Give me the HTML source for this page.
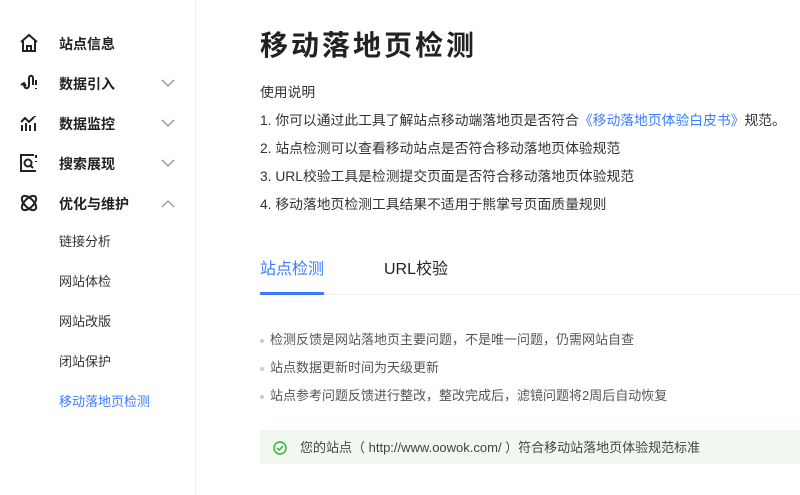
<!DOCTYPE html><html><head><meta charset="utf-8"><style>
body{margin:0;width:800px;height:495px;overflow:hidden;background:#fff;font-family:"Liberation Sans","Noto Sans CJK SC",sans-serif;position:relative}
.a{position:absolute;white-space:nowrap}
.side{position:absolute;left:0;top:0;width:195px;height:495px;border-right:1px solid #eee}
.m{position:absolute;left:59px;font-size:14px;font-weight:bold;color:#222;line-height:20px}
.s{position:absolute;left:59px;font-size:13px;color:#333;line-height:20px}
.ic{position:absolute;left:19px}
.ch{position:absolute;left:161px}
.t{font-size:13.8px;color:#333;left:260px;line-height:20px}
.b{font-size:13px;color:#555;left:270px;line-height:20px}
.dot{position:absolute;left:260px;width:4px;height:4px;background:#ccc;border-radius:2px}
</style></head><body>
<div class="side">
<svg class="ic" style="top:33px" width="20" height="20" viewBox="0 0 20 20" fill="none" stroke="#222" stroke-width="2"><path d="M2 9 L10 2 L18 9 M4 8 V18 H16 V8 M8 18 V13 H12 V18"/></svg>
<div class="m" style="top:34px">站点信息</div>
<svg class="ic" style="top:73px" width="20" height="20" viewBox="0 0 20 20" fill="none" stroke="#222" stroke-width="2"><path d="M2 12 L5 10 L7 13 M5 10 C4 16 10 17 10 12 V5 C10 2 14 2 14 5 V12"/><path d="M17 7 V12 M17 15 V16"/></svg>
<div class="m" style="top:74px">数据引入</div>
<svg class="ch" style="top:79px" width="14" height="9" viewBox="0 0 14 9" fill="none" stroke="#999" stroke-width="1.3"><path d="M1 1 L7 7 L13 1"/></svg>
<svg class="ic" style="top:113px" width="20" height="20" viewBox="0 0 20 20" fill="none" stroke="#222" stroke-width="2"><path d="M2 9 L6 5 L10 9 L15 4 M3 12 V18 M7 10 V18 M11 12 V18 M16 10 V18 M16 3 V4"/></svg>
<div class="m" style="top:114px">数据监控</div>
<svg class="ch" style="top:119px" width="14" height="9" viewBox="0 0 14 9" fill="none" stroke="#999" stroke-width="1.3"><path d="M1 1 L7 7 L13 1"/></svg>
<svg class="ic" style="top:153px" width="20" height="20" viewBox="0 0 20 20" fill="none" stroke="#222" stroke-width="2"><path d="M15 2 H2 V18 H17 M17 2 V5 M17 8 V9"/><circle cx="9" cy="10" r="3.5"/><path d="M11.5 12.5 L14 15"/></svg>
<div class="m" style="top:154px">搜索展现</div>
<svg class="ch" style="top:159px" width="14" height="9" viewBox="0 0 14 9" fill="none" stroke="#999" stroke-width="1.3"><path d="M1 1 L7 7 L13 1"/></svg>
<svg class="ic" style="top:193px" width="20" height="20" viewBox="0 0 20 20" fill="none" stroke="#222" stroke-width="2"><ellipse cx="10" cy="10" rx="9" ry="4.5" transform="rotate(45 10 10)"/><ellipse cx="10" cy="10" rx="9" ry="4.5" transform="rotate(-45 10 10)"/></svg>
<div class="m" style="top:194px">优化与维护</div>
<svg class="ch" style="top:199px" width="14" height="9" viewBox="0 0 14 9" fill="none" stroke="#999" stroke-width="1.3"><path d="M1 8 L7 2 L13 8"/></svg>
<div class="s" style="top:232px">链接分析</div>
<div class="s" style="top:272px">网站体检</div>
<div class="s" style="top:312px">网站改版</div>
<div class="s" style="top:352px">闭站保护</div>
<div class="s" style="top:392px;color:#3b7cff">移动落地页检测</div>
</div>
<div class="a" style="left:260px;top:26px;font-size:28px;font-weight:bold;color:#222;line-height:40px;letter-spacing:3px">移动落地页检测</div>
<div class="a t" style="top:83px">使用说明</div>
<div class="a t" style="top:111px">1. 你可以通过此工具了解站点移动端落地页是否符合<span style="color:#3b7cff">《移动落地页体验白皮书》</span>规范。</div>
<div class="a t" style="top:139px">2. 站点检测可以查看移动站点是否符合移动落地页体验规范</div>
<div class="a t" style="top:167px">3. URL校验工具是检测提交页面是否符合移动落地页体验规范</div>
<div class="a t" style="top:195px">4. 移动落地页检测工具结果不适用于熊掌号页面质量规则</div>
<div class="a" style="left:260px;top:259px;font-size:16px;color:#3b7cff;line-height:22px">站点检测</div>
<div class="a" style="left:384px;top:259px;font-size:16px;color:#222;line-height:22px">URL校验</div>
<div class="a" style="left:260px;top:294px;width:540px;height:1px;background:#eee"></div>
<div class="a" style="left:260px;top:292px;width:64px;height:3px;background:#3b7cff"></div>
<div class="dot" style="top:339px"></div><div class="a b" style="top:330px">检测反馈是网站落地页主要问题，不是唯一问题，仍需网站自查</div>
<div class="dot" style="top:367px"></div><div class="a b" style="top:358px">站点数据更新时间为天级更新</div>
<div class="dot" style="top:395px"></div><div class="a b" style="top:386px">站点参考问题反馈进行整改，整改完成后，滤镜问题将2周后自动恢复</div>
<div class="a" style="left:260px;top:430px;width:540px;height:34px;background:#f1f8f0"></div>
<svg class="a" style="left:273px;top:441px" width="14" height="14" viewBox="0 0 14 14" fill="none" stroke="#2bb52b" stroke-width="1.4"><circle cx="7" cy="7" r="6"/><path d="M4 7 L6.2 9 L10 5"/></svg>
<div class="a" style="left:300px;top:438px;font-size:13px;color:#444;line-height:20px">您的站点（ http://www.oowok.com/ ）符合移动站落地页体验规范标准</div>
</body></html>
